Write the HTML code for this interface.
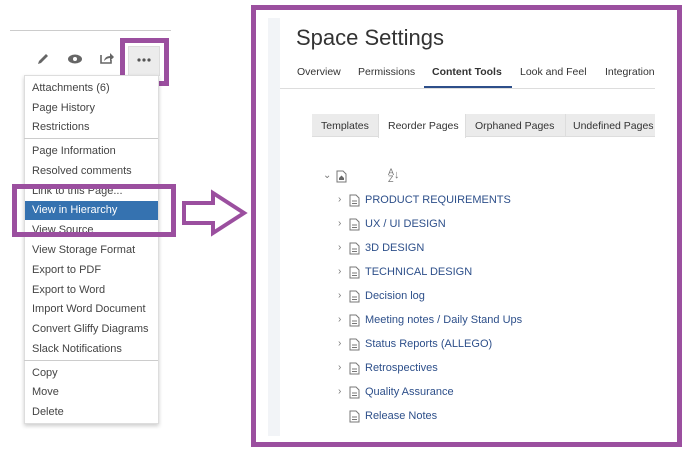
<!DOCTYPE html>
<html><head><meta charset="utf-8"><style>
*{margin:0;padding:0;box-sizing:border-box}
body{width:689px;height:459px;background:#fff;position:relative;overflow:hidden;font-family:"Liberation Sans",sans-serif}
.a{position:absolute}
.mi{position:absolute;left:32px;font-size:11px;color:#444;white-space:nowrap}
.sep{position:absolute;left:24px;width:134px;height:1px;background:#ccc}
.tab{position:absolute;font-size:10.5px;color:#333;white-space:nowrap}
.tr{position:absolute;left:338px;font-size:11px;color:#2d4f8a;white-space:nowrap;height:14px}
.tr .c{position:absolute;left:0;top:0;color:#777;font-size:10px}
.tr svg{position:absolute;left:11px;top:0}
.tr span.t{position:absolute;left:27px;top:0}
</style></head><body>
<div class="a" style="left:10px;top:30px;width:161px;height:1px;background:#ccc"></div>
<svg class="a" style="left:36px;top:52px" width="14" height="14"><path d="M2 12 L3 9 L10 2 L12 4 L5 11 Z" fill="#666"/></svg>
<svg class="a" style="left:67px;top:53px" width="16" height="12"><ellipse cx="8" cy="6" rx="7" ry="4.5" fill="#666"/><circle cx="8" cy="6" r="2" fill="#fff"/></svg>
<svg class="a" style="left:99px;top:51px" width="16" height="14"><path d="M2 4 V12 H12 V9" stroke="#666" stroke-width="1.6" fill="none"/><path d="M5 10 Q6 5 11 5 V2 L15 6 L11 10 V7 Q8 7 5 10Z" fill="#666"/></svg>
<div class="a" style="left:128px;top:46px;width:32px;height:30px;background:#ececec;border:1px solid #ddd"></div>
<svg class="a" style="left:137px;top:58px" width="14" height="4"><circle cx="2" cy="2" r="1.6" fill="#555"/><circle cx="7" cy="2" r="1.6" fill="#555"/><circle cx="12" cy="2" r="1.6" fill="#555"/></svg>
<div class="a" style="left:120px;top:38px;width:49px;height:48px;border:5px solid #9b4f9f"></div>
<div class="a" style="left:24px;top:75px;width:135px;height:349px;background:#fff;border:1px solid #ddd;box-shadow:0 2px 4px rgba(0,0,0,.2)"></div>
<div class="mi" style="top:82px">Attachments (6)</div>
<div class="mi" style="top:102px">Page History</div>
<div class="mi" style="top:121px">Restrictions</div>
<div class="sep" style="top:138px"></div>
<div class="mi" style="top:145px">Page Information</div>
<div class="mi" style="top:165px">Resolved comments</div>
<div class="mi" style="top:185px">Link to this Page...</div>
<div class="a" style="left:25px;top:201px;width:133px;height:19px;background:#3572b0"></div>
<div class="mi" style="top:204px;color:#fff">View in Hierarchy</div>
<div class="mi" style="top:224px">View Source</div>
<div class="mi" style="top:244px">View Storage Format</div>
<div class="mi" style="top:264px">Export to PDF</div>
<div class="mi" style="top:284px">Export to Word</div>
<div class="mi" style="top:303px">Import Word Document</div>
<div class="mi" style="top:323px">Convert Gliffy Diagrams</div>
<div class="mi" style="top:343px">Slack Notifications</div>
<div class="sep" style="top:360px"></div>
<div class="mi" style="top:367px">Copy</div>
<div class="mi" style="top:386px">Move</div>
<div class="mi" style="top:406px">Delete</div>
<div class="a" style="left:12px;top:184px;width:164px;height:53px;border:5px solid #9b4f9f"></div>
<svg class="a" style="left:180px;top:188px" width="70" height="50"><path d="M4 15 H33 V5 L64 25 L33 45 V35 H4 Z" fill="none" stroke="#9b4f9f" stroke-width="4"/></svg>
<div class="a" style="left:251px;top:5px;width:431px;height:442px;border:5px solid #9b4f9f"></div>
<div class="a" style="left:268px;top:18px;width:12px;height:418px;background:#f2f4f7"></div>
<div class="a" style="left:296px;top:25px;font-size:22px;color:#333">Space Settings</div>
<div class="tab" style="left:297px;top:66px">Overview</div>
<div class="tab" style="left:358px;top:66px">Permissions</div>
<div class="tab" style="left:432px;top:66px;font-weight:bold">Content Tools</div>
<div class="tab" style="left:520px;top:66px">Look and Feel</div>
<div class="tab" style="left:605px;top:66px;width:50px;overflow:hidden">Integrations</div>
<div class="a" style="left:280px;top:88px;width:375px;height:1px;background:#ddd"></div>
<div class="a" style="left:424px;top:86px;width:88px;height:2px;background:#2d4f8a"></div>
<div class="a" style="left:312px;top:114px;width:343px;height:23px;background:#ebebeb;border-bottom:1px solid #ddd"></div>
<div class="a" style="left:378px;top:114px;width:88px;height:24px;background:#fff;border-left:1px solid #ddd;border-right:1px solid #ddd"></div>
<div class="a" style="left:565px;top:114px;width:1px;height:23px;background:#ddd"></div>
<div class="tab" style="left:321px;top:120px">Templates</div>
<div class="tab" style="left:388px;top:120px">Reorder Pages</div>
<div class="tab" style="left:475px;top:120px">Orphaned Pages</div>
<div class="tab" style="left:573px;top:120px;width:82px;overflow:hidden">Undefined Pages</div>
<div class="a" style="left:323px;top:170px;font-size:10px;color:#777">⌄</div>
<svg class="a" style="left:336px;top:170px" width="11" height="13"><path d="M1 1 H7 L10 4 V12 H1 Z" fill="none" stroke="#777"/><path d="M3 8 L5.5 5.5 L8 8 V10 H3Z" fill="#666"/></svg>
<div class="a" style="left:388px;top:169px;font-size:9px;color:#777;line-height:7px">A<br>Z</div>
<div class="a" style="left:394px;top:169px;font-size:11px;color:#777">↓</div>
<div id="tree"></div>
<script>
var items=["PRODUCT REQUIREMENTS","UX / UI DESIGN","3D DESIGN","TECHNICAL DESIGN","Decision log","Meeting notes / Daily Stand Ups","Status Reports (ALLEGO)","Retrospectives","Quality Assurance","Release Notes"];
var h="";items.forEach(function(t,i){var y=194+i*24;h+='<div class="tr" style="top:'+y+'px">'+(i<9?'<span class="c">›</span>':'')+'<svg width="11" height="13"><path d="M1 1 H7 L10 4 V12 H1 Z" fill="none" stroke="#777"/><path d="M3 7 H8 M3 9.5 H8" stroke="#777"/></svg><span class="t">'+t+'</span></div>';});
document.getElementById("tree").innerHTML=h;
</script>
</body></html>
